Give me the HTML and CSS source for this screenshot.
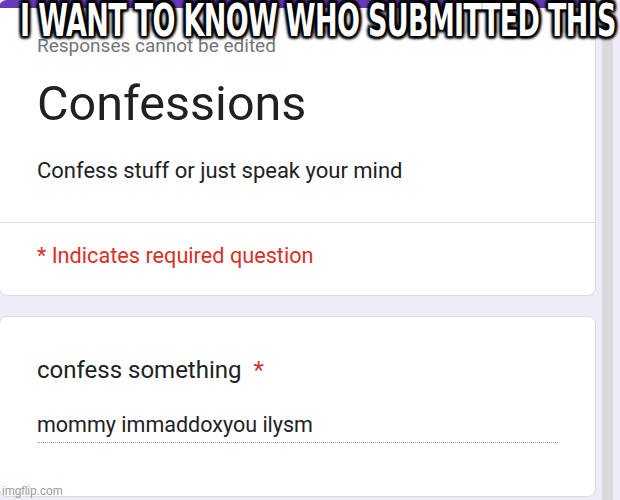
FILE: index.html
```html
<!DOCTYPE html>
<html>
<head>
<meta charset="utf-8">
<link rel="stylesheet" href="styles.css">
</head>
<body>
<div class="page">
  <main class="forms">
    <section class="card header-card">
      <div class="header-top">
        <p class="note">Responses cannot be edited</p>
        <h1 class="title">Confessions</h1>
        <p class="desc">Confess stuff or just speak your mind</p>
      </div>
      <div class="header-bottom">
        <p class="required">* Indicates required question</p>
      </div>
    </section>
    <section class="card question-card">
      <p class="question">confess something <span class="star">*</span></p>
      <p class="answer">mommy immaddoxyou ilysm</p>
      <div class="dotted"></div>
    </section>
  </main>
  <div class="scrollbar"></div>
</div>
<div class="caption"><span class="caption-text">I WANT TO KNOW WHO SUBMITTED THIS</span></div>
<div class="watermark">imgflip.com</div>
</body>
</html>
```

FILE: styles.css
```css
html, body {
  margin: 0;
  padding: 0;
}
body {
  width: 620px;
  height: 500px;
  overflow: hidden;
  background: #efebf7;
  font-family: Roboto, "Noto Sans", Arial, sans-serif;
  position: relative;
}
.page {
  display: flex;
  align-items: stretch;
  height: 500px;
}
.forms {
  width: 596px;
  display: flex;
  flex-direction: column;
  gap: 20px;
}
.scrollbar {
  width: 11px;
  margin-left: 6px;
  background: #d9d9de;
}
.card {
  background: #fff;
  border: 1px solid #dadce0;
  border-radius: 8px;
  box-sizing: border-box;
}
.header-card {
  height: 296px;
  border-top: 8px solid #673ab7;
  margin-left: -1px;
  display: flex;
  flex-direction: column;
}
.header-top {
  padding: 27px 0 0 37px;
  height: 215px;
  box-sizing: border-box;
  border-bottom: 1px solid #dadce0;
}
.note {
  margin: 0;
  font-size: 19px;
  line-height: 22px;
  color: #70757a;
}
.title {
  margin: 19px 0 0;
  font-weight: 400;
  font-size: 48.5px;
  line-height: 56px;
  color: #202124;
}
.desc {
  margin: 26px 0 0;
  font-size: 22px;
  line-height: 26px;
  color: #202124;
}
.header-bottom {
  padding: 20px 0 0 37px;
}
.required {
  margin: 0;
  font-size: 21.7px;
  line-height: 26px;
  color: #d93025;
}
.question-card {
  height: 181px;
  margin-left: -1px;
  padding: 38px 37px 0 37px;
}
.question {
  margin: 0;
  font-size: 24px;
  line-height: 30px;
  color: #202124;
}
.star {
  color: #d93025;
  margin-left: 6px;
}
.answer {
  margin: 27px 0 0;
  font-size: 21.5px;
  line-height: 26px;
  color: #202124;
}
.dotted {
  margin-top: 4px;
  width: 521px;
  border-bottom: 1px dotted #9aa0a6;
}
.caption {
  position: absolute;
  top: 0;
  left: 18px;
  width: 600px;
  display: flex;
  justify-content: center;
  white-space: nowrap;
}
.caption-text {
  display: inline-block;
  font-family: "DejaVu Sans", "Liberation Sans", Arial, sans-serif;
  font-stretch: condensed;
  font-weight: 700;
  font-size: 30px;
  line-height: 30px;
  color: #fff;
  letter-spacing: -0.65px;
  transform-origin: center top;
  transform: translateY(-1px) scaleY(1.46);
  text-shadow:
    2px 2px 2px #000, -2px -2px 2px #000, 2px -2px 2px #000, -2px 2px 2px #000,
    0 2px 3px #000, 0 -2px 3px #000, 2px 0 3px #000, -2px 0 3px #000;
}
.watermark {
  position: absolute;
  left: 2px;
  bottom: 2px;
  font-family: "Liberation Sans", Arial, sans-serif;
  font-size: 12px;
  color: #9a9a9a;
}
```
